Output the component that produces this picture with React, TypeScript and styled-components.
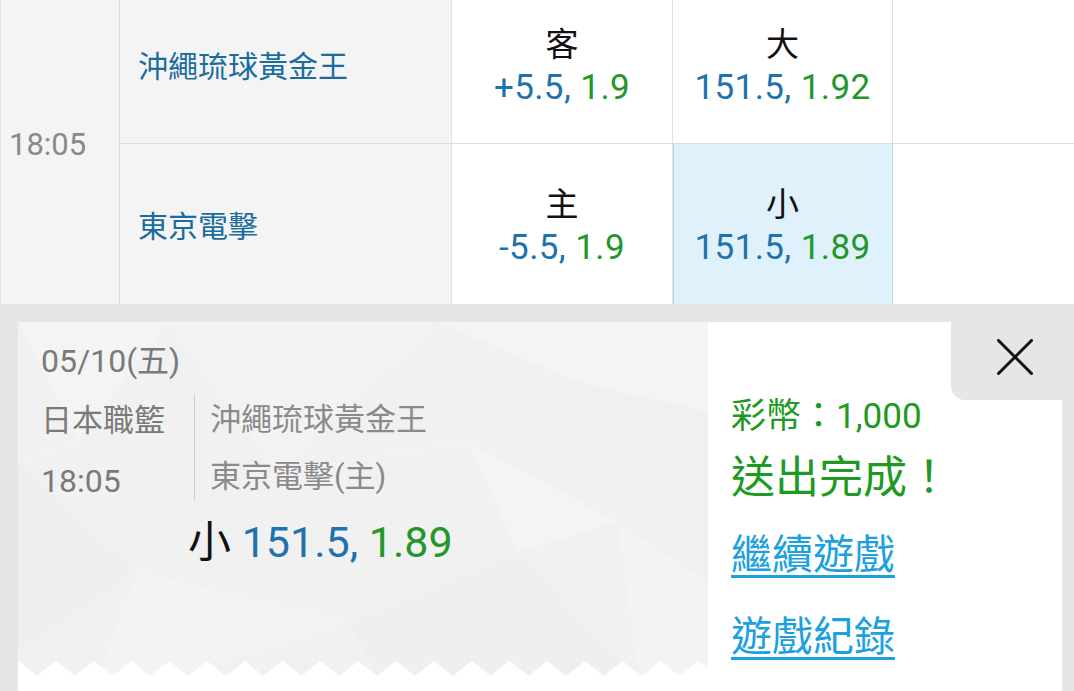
import styled, { createGlobalStyle } from 'styled-components';

const GlobalStyle = createGlobalStyle`
  html, body {
    margin: 0;
    padding: 0;
    height: 100%;
    overflow: hidden;
    background: #fff;
  }
  body {
    font-family: Roboto, "Noto Sans CJK TC", "Noto Sans", sans-serif;
  }
`;

const rows = [
  { team: '沖繩琉球黃金王', spreadLabel: '客', spread: '+5.5,', spreadOdds: '1.9', totalLabel: '大', total: '151.5,', totalOdds: '1.92', picked: false },
  { team: '東京電擊', spreadLabel: '主', spread: '-5.5,', spreadOdds: '1.9', totalLabel: '小', total: '151.5,', totalOdds: '1.89', picked: true },
];

const App = () => {
  return (
    <>
      <GlobalStyle />
      <Page>
        <Table>
          <TimeCell>18:05</TimeCell>
          {rows.map((r, i) => (
            <Row key={r.team} $last={i === rows.length - 1}>
              <TeamCell>{r.team}</TeamCell>
              <OddsCell>
                <Label>{r.spreadLabel}</Label>
                <Value>
                  <Blue>{r.spread}</Blue> <Green>{r.spreadOdds}</Green>
                </Value>
              </OddsCell>
              <OddsCell $picked={r.picked}>
                <Label>{r.totalLabel}</Label>
                <Value>
                  <Blue>{r.total}</Blue> <Green>{r.totalOdds}</Green>
                </Value>
              </OddsCell>
              <EmptyCell />
            </Row>
          ))}
        </Table>

        <Drawer>
          <Card>
            <Ticket>
              <Texture viewBox="0 0 690 354" preserveAspectRatio="none">
                <polygon points="0,0 150,0 60,120" fill="#f4f4f4" />
                <polygon points="150,0 420,0 260,150" fill="#f3f3f3" />
                <polygon points="420,0 690,0 690,90 560,60" fill="#f4f4f4" />
                <polygon points="560,60 690,90 690,260 600,200" fill="#f0f0f0" />
                <polygon points="0,140 120,250 0,330" fill="#efefef" />
                <polygon points="120,250 330,300 160,354 80,354" fill="#f3f3f3" />
                <polygon points="330,300 500,230 620,354 360,354" fill="#efefef" />
                <polygon points="450,120 600,200 500,230" fill="#f4f4f4" />
                <polygon points="600,200 690,260 690,354 620,354" fill="#f3f3f3" />
                <line x1="60" y1="120" x2="0" y2="140" stroke="#f6f6f6" strokeWidth="1" />
                <line x1="260" y1="150" x2="450" y2="120" stroke="#f6f6f6" strokeWidth="1" />
              </Texture>
              <Zigzag viewBox="0 0 690 17" preserveAspectRatio="none">
                <defs>
                  <pattern id="teeth" width="37.8" height="17" patternUnits="userSpaceOnUse" patternTransform="translate(-18.9 0)">
                    <polygon points="0,17 18.9,2 37.8,17" fill="#fff" />
                  </pattern>
                </defs>
                <rect x="0" y="0" width="690" height="17" fill="url(#teeth)" />
              </Zigzag>

              <TicketBody>
                <DateLine>05/10(五)</DateLine>
                <InfoRow>
                  <LeagueCol>
                    <GreyLine>日本職籃</GreyLine>
                    <GreyLine $big>18:05</GreyLine>
                  </LeagueCol>
                  <Divider />
                  <TeamsCol>
                    <TeamLine>沖繩琉球黃金王</TeamLine>
                    <TeamLine>東京電擊(主)</TeamLine>
                  </TeamsCol>
                </InfoRow>
                <BetLine>
                  小 <Blue>151.5,</Blue> <Green>1.89</Green>
                </BetLine>
              </TicketBody>
            </Ticket>

            <Result>
              <Coins>彩幣：1,000</Coins>
              <Done>送出完成！</Done>
              <LinkText href="#" $gap={19}>繼續遊戲</LinkText>
              <LinkText href="#" $gap={26}>遊戲紀錄</LinkText>
            </Result>
          </Card>

          <CloseTab>
            <svg width="36" height="36" viewBox="0 0 36 36">
              <path d="M1.5 1.5 L34.5 34.5 M34.5 1.5 L1.5 34.5" stroke="#111" strokeWidth="3" strokeLinecap="round" />
            </svg>
          </CloseTab>
        </Drawer>
      </Page>
    </>
  );
};

export default App;

const Page = styled.div`
  width: 1074px;
  height: 691px;
  display: flex;
  flex-direction: column;
  overflow: hidden;
`;

const Table = styled.div`
  display: grid;
  grid-template-columns: 120px 1fr;
  grid-template-rows: 160px 160px;
  margin-top: -16px;
  flex-shrink: 0;
`;

const TimeCell = styled.div`
  grid-row: 1 / span 2;
  display: flex;
  align-items: center;
  padding-left: 8px;
  background: #f4f4f4;
  border-left: 1px solid #e2e2e2;
  border-right: 1px solid #dcdcdc;
  color: #8a8a8a;
  font-size: 31px;
`;

const Row = styled.div<{ $last?: boolean }>`
  grid-column: 2;
  display: grid;
  grid-template-columns: 332px 221px 220px 1fr;
  border-bottom: ${(p) => (p.$last ? 'none' : '1px solid #dcdcdc')};
`;

const TeamCell = styled.div`
  display: flex;
  align-items: center;
  padding-left: 18px;
  background: #f4f4f4;
  border-right: 1px solid #dde2e5;
  color: #1b6c9e;
  font-size: 30px;
`;

const OddsCell = styled.div<{ $picked?: boolean }>`
  display: flex;
  flex-direction: column;
  align-items: center;
  justify-content: center;
  padding-top: 6px;
  background: ${(p) => (p.$picked ? '#dff2fc' : '#fff')};
  border-right: 1px solid ${(p) => (p.$picked ? '#bcd8e8' : '#dde2e5')};
  box-shadow: ${(p) => (p.$picked ? 'inset 1px 0 0 #bcd8e8' : 'none')};
`;

const EmptyCell = styled.div`
  background: #fff;
`;

const Label = styled.div`
  font-size: 33px;
  line-height: 42px;
  color: #111;
`;

const Value = styled.div`
  font-size: 35px;
  line-height: 44px;
  letter-spacing: 0.4px;
`;

const Blue = styled.span`
  color: #1f72ad;
`;

const Green = styled.span`
  color: #22982a;
`;

const Drawer = styled.div`
  position: relative;
  flex: 1;
  background: #e6e6e6;
  padding: 18px 12px 0 18px;
  display: flex;
`;

const Card = styled.div`
  flex: 1;
  display: grid;
  grid-template-columns: 690px 1fr;
  align-items: start;
  background: #fff;
`;

const Ticket = styled.div`
  position: relative;
  height: 354px;
  background: #f1f1f1;
  overflow: hidden;
`;

const Texture = styled.svg`
  position: absolute;
  inset: 0;
  width: 100%;
  height: 100%;
`;

const Zigzag = styled.svg`
  position: absolute;
  left: 0;
  bottom: 0;
  width: 100%;
  height: 17px;
`;

const TicketBody = styled.div`
  position: relative;
  padding: 19px 0 0 23px;
  display: flex;
  flex-direction: column;
`;

const DateLine = styled.div`
  font-size: 32px;
  line-height: 40px;
  color: #7a7a7a;
`;

const InfoRow = styled.div`
  display: flex;
  margin-top: 10px;
`;

const LeagueCol = styled.div`
  width: 153px;
  display: flex;
  flex-direction: column;
`;

const GreyLine = styled.div<{ $big?: boolean }>`
  font-size: ${(p) => (p.$big ? '32px' : '31px')};
  line-height: 60px;
  color: #7a7a7a;
`;

const Divider = styled.div`
  width: 1px;
  height: 107px;
  margin-top: 3px;
  background: #cfcfcf;
`;

const TeamsCol = styled.div`
  display: flex;
  flex-direction: column;
  padding-left: 15px;
`;

const TeamLine = styled.div`
  font-size: 31px;
  line-height: 57px;
  color: #8a8a8a;
`;

const BetLine = styled.div`
  margin: 6px 0 0 147px;
  font-size: 43px;
  line-height: 50px;
  color: #111;
`;

const Result = styled.div`
  display: flex;
  flex-direction: column;
  align-items: flex-start;
  padding: 73px 0 0 23px;
`;

const Coins = styled.div`
  font-size: 35px;
  line-height: 44px;
  color: #1e9a22;
`;

const Done = styled.div`
  margin-top: 9px;
  font-size: 44px;
  line-height: 60px;
  color: #1e9a22;
`;

const LinkText = styled.a<{ $gap: number }>`
  margin-top: ${(p) => p.$gap}px;
  font-size: 41px;
  line-height: 56px;
  color: #1ba1df;
  text-decoration: underline;
  text-decoration-thickness: 3px;
  text-underline-offset: 6px;
`;

const CloseTab = styled.div`
  position: absolute;
  top: 0;
  right: 0;
  width: 123px;
  height: 96px;
  background: #e6e6e6;
  border-bottom-left-radius: 14px;
  display: flex;
  align-items: center;
  justify-content: center;
  padding: 10px 0 0 5px;
  box-sizing: border-box;
`;
